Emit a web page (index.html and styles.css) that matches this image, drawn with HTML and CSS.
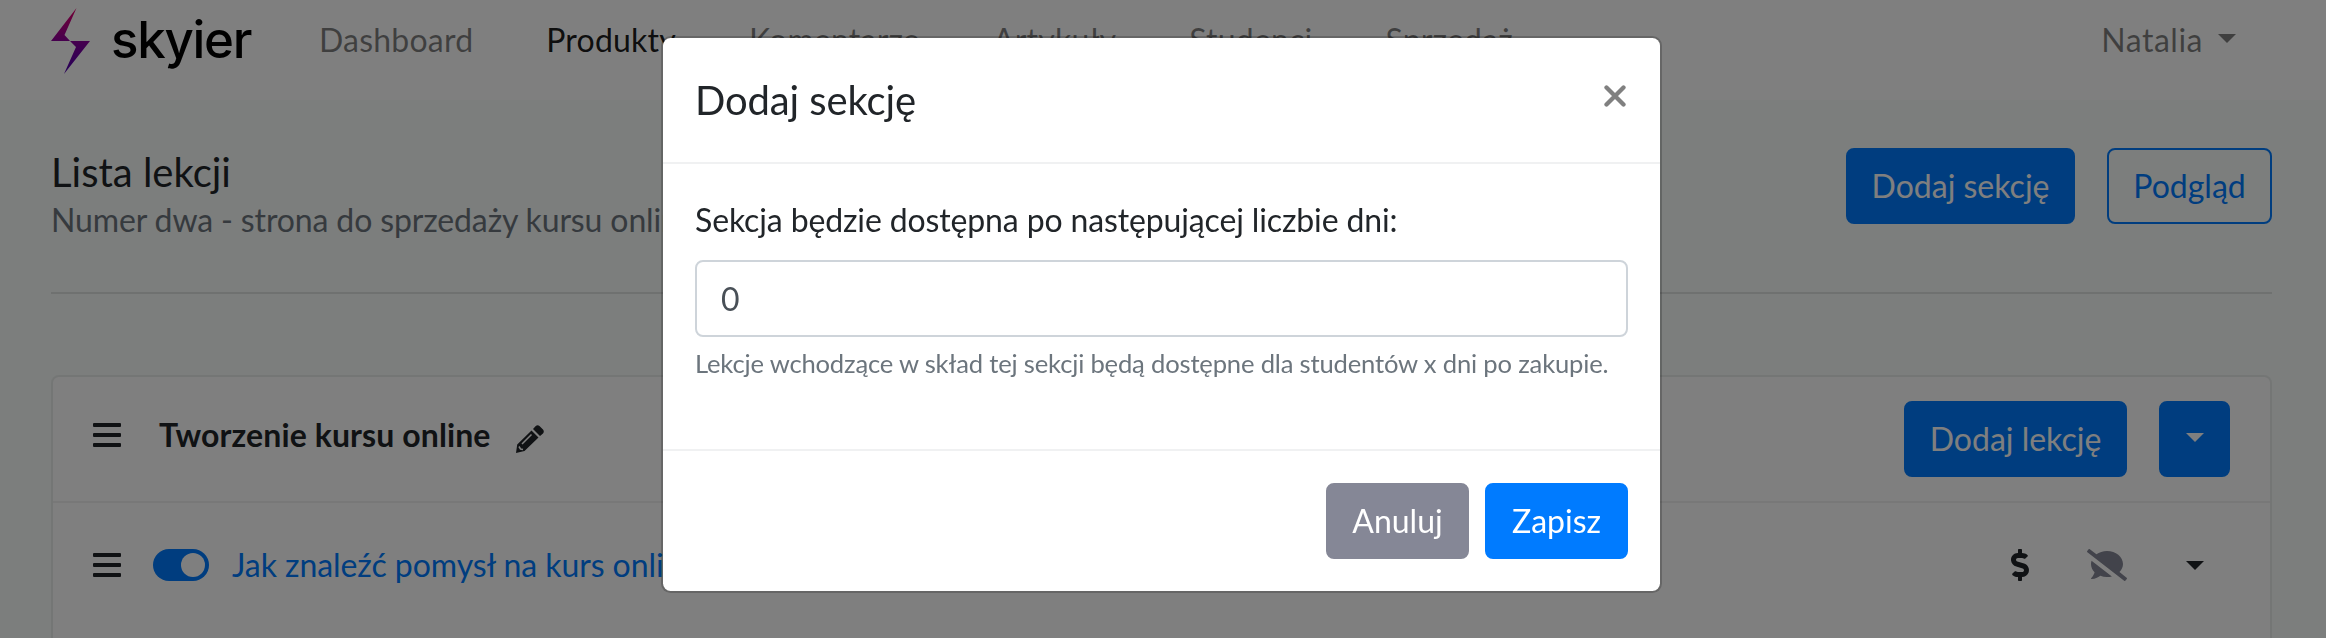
FILE: index.html
```html
<!DOCTYPE html>
<html lang="pl">
<head>
<meta charset="utf-8">
<title>Skyier</title>
<link rel="stylesheet" href="styles.css">
</head>
<body>
<header class="topbar">
  <a class="brand">
    <svg class="brand-mark" width="40" height="68" viewBox="0 0 40 68"><defs><linearGradient id="bolt" x1="0" y1="0" x2="0" y2="1"><stop offset="0" stop-color="#e8006c"/><stop offset=".5" stop-color="#8c009c"/><stop offset="1" stop-color="#4a00b0"/></linearGradient></defs><path fill="url(#bolt)" d="M25.500 1L0 34h19L13.500 28zM19 34h20L13 67l12-27z"/></svg>
    <span class="brand-name">skyier</span>
  </a>
  <nav class="nav">
    <a>Dashboard</a><a class="active">Produkty</a><a>Komentarze</a><a>Artykuły</a><a>Studenci</a><a>Sprzedaż</a>
  </nav>
  <a class="user">Natalia <i class="caret"></i></a>
</header>
<main class="page">
  <section class="page-head">
    <div>
      <h1 class="title">Lista lekcji</h1>
      <p class="subtitle">Numer dwa - strona do sprzedaży kursu online</p>
    </div>
    <div class="actions">
      <a class="btn btn-primary">Dodaj sekcję</a>
      <a class="btn btn-outline">Podgląd</a>
    </div>
  </section>
  <section class="card">
    <div class="row section-row">
      <span class="handle"><i></i><i></i><i></i></span>
      <strong class="section-name">Tworzenie kursu online</strong>
      <svg class="pencil" width="28" height="28" viewBox="0 0 28 28"><path fill="#212529" d="M17 4l2.500-2.700q2-2 4-.3l3.500 3.500q1.600 2 0 4L24 11zM15.500 5.500l7 7L8.500 26 0 28l1.200-8.500z"/><path d="M15.500 9.500L6 19M3 21.500l1.500 2.500 2.500.5" fill="none" stroke="#fff" stroke-width="1.500"/></svg>
      <div class="row-actions">
        <a class="btn btn-primary">Dodaj lekcję</a>
        <a class="btn btn-primary btn-drop"><i class="caret"></i></a>
      </div>
    </div>
    <div class="row lesson-row">
      <span class="handle"><i></i><i></i><i></i></span>
      <span class="switch"></span>
      <a class="lesson-link">Jak znaleźć pomysł na kurs online</a>
      <div class="lesson-icons">
        <svg width="20" height="32" viewBox="0 0 288 512"><path fill="#212529" d="M209.200 233.400l-108-31.600C88.700 198.200 80 186.500 80 173.500c0-16.300 13.200-29.500 29.500-29.500h66.300c12.200 0 24.200 3.700 34.200 10.500 6.100 4.100 14.300 3.100 19.500-2l34.800-34c7.100-6.900 6.100-18.400-1.800-24.500C238 74.800 207.400 64.100 176 64V16c0-8.800-7.200-16-16-16h-32c-8.800 0-16 7.200-16 16v48h-2.500C45.800 64-5.400 118.700.5 183.600c4.200 46.100 39.400 83.600 83.800 96.600l102.500 30c12.500 3.700 21.200 15.300 21.200 28.300 0 16.300-13.200 29.500-29.500 29.500h-66.300C100 368 88 364.300 78 357.500c-6.100-4.100-14.300-3.100-19.500 2l-34.800 34c-7.100 6.900-6.100 18.400 1.800 24.500 24.500 19.200 55.100 29.900 86.500 30v48c0 8.800 7.200 16 16 16h32c8.800 0 16-7.200 16-16v-48.200c46.600-.9 90.300-28.600 105.700-72.700 21.500-61.600-14.600-124.800-72.500-141.700z"/></svg>
        <svg width="40" height="32" viewBox="0 0 640 512"><path fill="#858796" d="M64 240c0 49.600 21.400 95 57 130.700-12.600 50.300-54.300 95.200-54.800 95.800-2.200 2.300-2.800 5.700-1.500 8.700 1.300 2.900 4.100 4.800 7.300 4.800 66.300 0 116-31.800 140.600-51.400 32.700 12.300 69 19.400 107.400 19.400 27.400 0 53.700-3.600 78.400-10L72.900 186.400c-5.600 17.100-8.900 35-8.900 53.600zm569.800 218.100l-114.400-88.400C554.600 334.100 576 289.200 576 240c0-114.900-114.600-208-256-208-65.100 0-124.200 20.100-169.400 52.700L45.500 3.400C38.500-2 28.500-.8 23 6.200L3.400 31.400c-5.400 7-4.200 17 2.800 22.400L594.500 508.500c7 5.400 17 4.200 22.500-2.800l19.600-25.300c5.500-6.900 4.200-17-2.800-22.300z"/></svg>
        <i class="caret"></i>
      </div>
    </div>
  </section>
</main>
<div class="backdrop">
  <div class="modal">
    <div class="modal-header">
      <h2 class="title">Dodaj sekcję</h2>
      <svg class="close" width="22" height="22" viewBox="0 0 22 22"><path d="M2.500 2.500l17 17M19.500 2.500l-17 17" stroke="#808080" stroke-width="4.300" stroke-linecap="round"/></svg>
    </div>
    <div class="modal-body">
      <label class="field-label" for="days">Sekcja będzie dostępna po następującej liczbie dni:</label>
      <input class="field" id="days" value="0">
      <p class="help">Lekcje wchodzące w skład tej sekcji będą dostępne dla studentów x dni po zakupie.</p>
    </div>
    <div class="modal-footer">
      <a class="btn btn-secondary">Anuluj</a>
      <a class="btn btn-primary">Zapisz</a>
    </div>
  </div>
</div>
</body>
</html>
```

FILE: styles.css
```css
* { box-sizing: border-box; }
html, body { height: 100%; }
body {
  margin: 0;
  background: #f8fcfa;
  color: #212529;
  font: 32px/48px Lato, sans-serif;
}
h1, h2, p { margin: 0; }
svg { display: block; flex: none; }

.topbar {
  display: flex;
  align-items: flex-start;
  height: 100px;
  padding: 0 90px 0 51px;
  background: #fff;
  color: rgba(0, 0, 0, .5);
}
.brand { display: flex; width: 268px; color: #000; }
.brand-mark { margin-top: 7px; }
.brand-name {
  margin: 10px 0 0 20px;
  font: 500 51px/60px Inter, sans-serif;
  letter-spacing: -1.3px;
}
.nav { display: flex; gap: 73px; padding-top: 16px; letter-spacing: .2px; }
.nav .active { color: rgba(0, 0, 0, .9); }
.user { display: flex; align-items: center; gap: 15px; margin: 16px 0 0 auto; letter-spacing: .5px; }
.caret {
  border: 9.6px solid transparent;
  border-top-color: currentColor;
  border-bottom: 0;
}
.user .caret { margin-top: -4px; }

.page { padding: 48px 54px 0 51px; }
.page-head {
  display: flex;
  justify-content: space-between;
  height: 146px;
  border-bottom: 2px solid rgba(0, 0, 0, .1);
}
.title { font-size: 40px; line-height: 48px; font-weight: 400; }
.subtitle { color: #6c757d; letter-spacing: -.13px; }
.actions { display: flex; gap: 32px; }
.btn {
  display: flex;
  align-items: center;
  justify-content: center;
  height: 76px;
  padding: 0 24px;
  border: 2px solid transparent;
  border-radius: 8px;
  white-space: nowrap;
}
.btn-primary { background: #007bff; border-color: #007bff; color: #fff; }
.btn-secondary { background: #858796; border-color: #858796; color: #fff; }
.btn-outline { width: 165px; border-color: #007bff; color: #007bff; }
.actions .btn-primary { width: 229px; }
.row-actions .btn-primary { width: 223px; }
.row-actions .btn-drop { width: 71px; }
.btn-drop .caret { margin-top: -3px; }

.card {
  height: 263px;
  margin-top: 81px;
  border: 2px solid rgba(0, 0, 0, .06);
  border-bottom: 0;
  border-radius: 8px 8px 0 0;
  background: #fff;
  background-clip: padding-box;
}
.row { display: flex; align-items: center; height: 126px; padding: 0 40px; }
.section-row { border-bottom: 2px solid rgba(0, 0, 0, .06); }
.lesson-row { height: 124px; }
.handle { display: flex; flex-direction: column; gap: 6px; width: 28px; }
.handle i { height: 4px; background: #212529; border-radius: 1px; }
.section-row .handle { margin-top: -8px; }
.section-name { margin: -8px 25px 0 38px; font-weight: 700; letter-spacing: .1px; }
.row-actions { display: flex; gap: 32px; margin-left: auto; }
.switch {
  display: flex;
  justify-content: flex-end;
  width: 56px;
  height: 32px;
  margin: 0 23px 0 32px;
  padding: 4px;
  border-radius: 16px;
  background: #007bff;
}
.switch::after { content: ""; width: 24px; height: 24px; border-radius: 50%; background: #fff; }
.lesson-link { color: #007bff; letter-spacing: -.06px; }
.lesson-icons { display: flex; align-items: center; margin: 0 26px 0 auto; }
.lesson-icons svg { margin-right: 57px; }
.lesson-icons svg:nth-child(2) { margin-right: 59px; }

.backdrop {
  position: fixed;
  inset: 0;
  padding-top: 36px;
  background: rgba(0, 0, 0, .5);
}
.modal {
  width: 1001px;
  margin-left: 661px;
  border: 2px solid rgba(0, 0, 0, .2);
  border-radius: 9.6px;
  background: #fff;
  background-clip: padding-box;
}
.modal-header {
  display: flex;
  justify-content: space-between;
  height: 126px;
  padding: 38px 34px 0 32px;
  border-bottom: 2px solid #f0f1f2;
}
.modal-header .title { letter-spacing: -.12px; }
.close { margin-top: 9px; }
.modal-body { height: 285px; padding: 32px; }
.field-label { display: block; margin-bottom: 16px; letter-spacing: -.13px; }
.field {
  display: block;
  width: 100%;
  height: 77px;
  padding: 12px 24px;
  border: 2px solid #ced4da;
  border-radius: 8px;
  color: #495057;
  font: 32px/48px Lato, sans-serif;
}
.help { margin-top: 7px; color: #6c757d; font-size: 25.6px; line-height: 38px; letter-spacing: -.18px; white-space: nowrap; }
.modal-footer {
  display: flex;
  justify-content: flex-end;
  gap: 16px;
  padding: 32px;
  border-top: 2px solid #f0f1f2;
}
.modal-footer .btn { width: 143px; }
```
